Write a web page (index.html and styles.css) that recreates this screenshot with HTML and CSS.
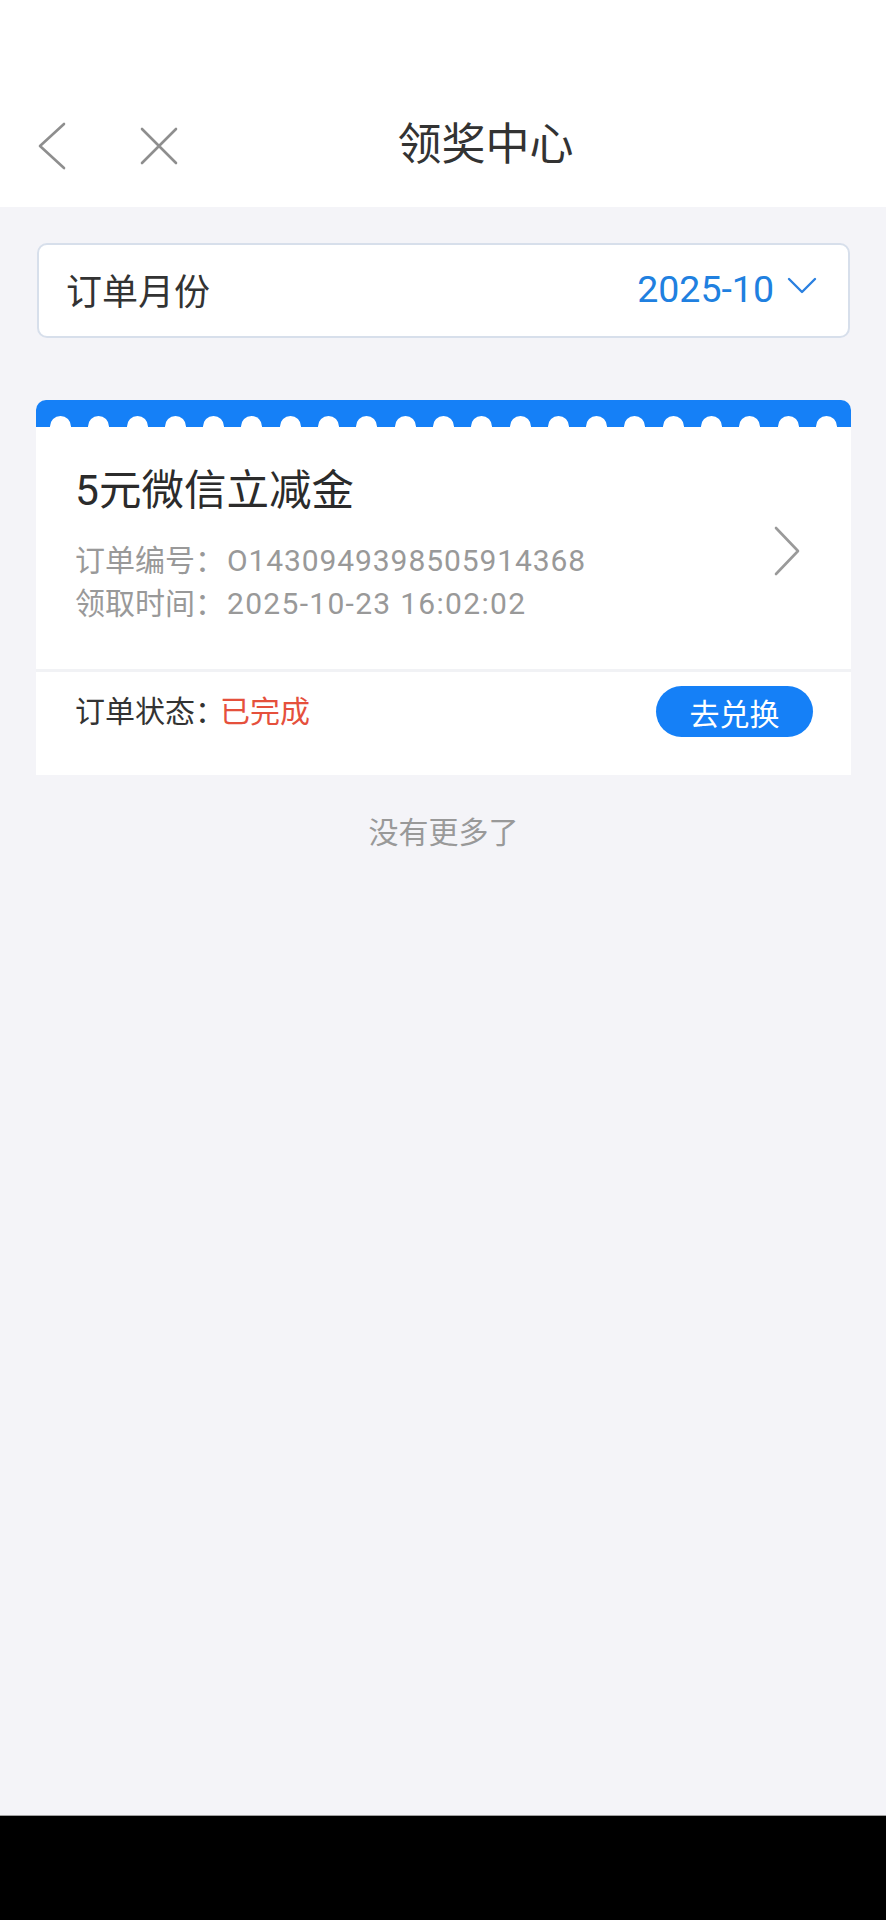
FILE: index.html
```html
<!DOCTYPE html>
<html lang="zh-CN">
<head>
<meta charset="utf-8">
<title>领奖中心</title>
<link rel="stylesheet" href="styles.css">
</head>
<body>
<div class="page">
  <header class="header">
    <div class="nav">
      <div class="nav-left">
        <svg class="ic-back" width="30" height="48" viewBox="0 0 30 48"><polyline points="27,2 3,24 27,46" fill="none" stroke="#8e8e8e" stroke-width="2.6" stroke-linecap="round" stroke-linejoin="round"/></svg>
        <svg class="ic-close" width="40" height="38" viewBox="0 0 40 38"><path d="M3 2 L37 36 M37 2 L3 36" fill="none" stroke="#8e8e8e" stroke-width="2.6" stroke-linecap="round"/></svg>
      </div>
      <div class="nav-title">领奖中心</div>
    </div>
  </header>
  <main class="content">
    <div class="month-box">
      <span class="month-label">订单月份</span>
      <span class="month-value">2025-10
        <svg class="ic-down" width="30" height="17" viewBox="0 0 30 17"><polyline points="2,2 15,15 28,2" fill="none" stroke="#2a80e0" stroke-width="2.4" stroke-linecap="round" stroke-linejoin="round"/></svg>
      </span>
    </div>

    <div class="card">
      <div class="card-band">
        <i></i><i></i><i></i><i></i><i></i><i></i><i></i><i></i><i></i><i></i><i></i><i></i><i></i><i></i><i></i><i></i><i></i><i></i><i></i><i></i><i></i>
      </div>
      <div class="card-body">
        <div class="card-info">
          <div class="card-title">5元微信立减金</div>
          <div class="card-lines">
            <div class="line"><span class="lbl">订单编号：</span><span class="num">O1430949398505914368</span></div>
            <div class="line"><span class="lbl">领取时间：</span><span class="num time">2025-10-23 16:02:02</span></div>
          </div>
        </div>
        <svg class="ic-right" width="28" height="50" viewBox="0 0 28 50"><polyline points="3,2 25,25 3,48" fill="none" stroke="#9a9a9a" stroke-width="2.6" stroke-linecap="round" stroke-linejoin="round"/></svg>
      </div>
      <div class="card-foot">
        <div class="status"><span class="status-lbl">订单状态：</span><span class="status-val">已完成</span></div>
        <div class="btn">去兑换</div>
      </div>
    </div>

    <div class="no-more">没有更多了</div>
  </main>
  <div class="sysbar"></div>
</div>
</body>
</html>
```

FILE: styles.css
```css
* { box-sizing: border-box; margin: 0; padding: 0; }
html, body { width: 886px; height: 1920px; }
body {
  font-family: Roboto, "Noto Sans CJK SC", sans-serif;
  background: #f4f4f8;
  color: #333;
}
.page {
  display: flex;
  flex-direction: column;
  height: 1920px;
}
.header {
  background: #fff;
  height: 207px;
  padding-top: 90px;
}
.nav {
  position: relative;
  height: 110px;
  display: flex;
  align-items: center;
  justify-content: center;
}
.nav-left {
  position: absolute;
  left: 37px;
  top: 0;
  height: 110px;
  display: flex;
  align-items: center;
  gap: 72px;
}
.ic-back { display: block; margin-top: 2px; }
.ic-close { display: block; margin-top: 2px; }
.nav-title {
  font-size: 44px;
  color: #333;
  line-height: 1;
  margin-left: 85px;
}
.content {
  flex: 1;
  padding: 36px 35px 0 36px;
}
.month-box {
  height: 95px;
  background: #fff;
  border: 2px solid #d7dfeb;
  border-radius: 10px;
  display: flex;
  align-items: center;
  justify-content: space-between;
  padding: 0 31px 4px 27px;
  margin: 0 1px 0 1px;
}
.month-label {
  font-size: 36px;
  color: #333;
}
.month-value {
  display: flex;
  align-items: center;
  gap: 13px;
  font-size: 37.5px;
  color: #2080e0;
}
.ic-down { display: block; margin-top: -6px; }
.card {
  margin-top: 62px;
  background: #fff;
  border-radius: 10px 10px 0 0;
  overflow: hidden;
}
.card-band {
  height: 27px;
  background: #1580f7;
  display: flex;
  align-items: flex-end;
  justify-content: space-between;
  padding: 0 14px;
}
.card-band i {
  display: block;
  width: 21px;
  height: 11px;
  background: #fff;
  border-radius: 10.5px 10.5px 0 0;
}
.card-body {
  display: flex;
  justify-content: space-between;
  align-items: center;
  padding: 38px 50px 44px 39px;
}
.card-title {
  font-size: 42.5px;
  line-height: 52px;
  color: #2b2b2b;
}
.card-lines {
  margin-top: 22px;
  font-size: 30px;
  line-height: 43px;
  color: #999;
}
.line { display: flex; white-space: nowrap; }
.num { letter-spacing: 0.9px; margin-left: 2px; }
.num.time { letter-spacing: 1.3px; }
.ic-right { display: block; margin-top: 12px; }
.card-foot {
  border-top: 3px solid #f1f2f5;
  display: flex;
  justify-content: space-between;
  align-items: center;
  padding: 14px 38px 38px 39px;
}
.status { font-size: 30px; color: #333; margin-top: -5px; }
.status-val { color: #e5503c; margin-left: -5px; }
.btn {
  width: 157px;
  height: 51px;
  border-radius: 26px;
  background: #1580f7;
  color: #fff;
  font-size: 30px;
  display: flex;
  align-items: center;
  justify-content: center;
}
.no-more {
  margin-top: 43px;
  text-align: center;
  font-size: 30px;
  color: #999;
  line-height: 30px;
}
.sysbar {
  height: 105px;
  background: #000;
  border-top: 1px solid #a0a0a0;
}
```
